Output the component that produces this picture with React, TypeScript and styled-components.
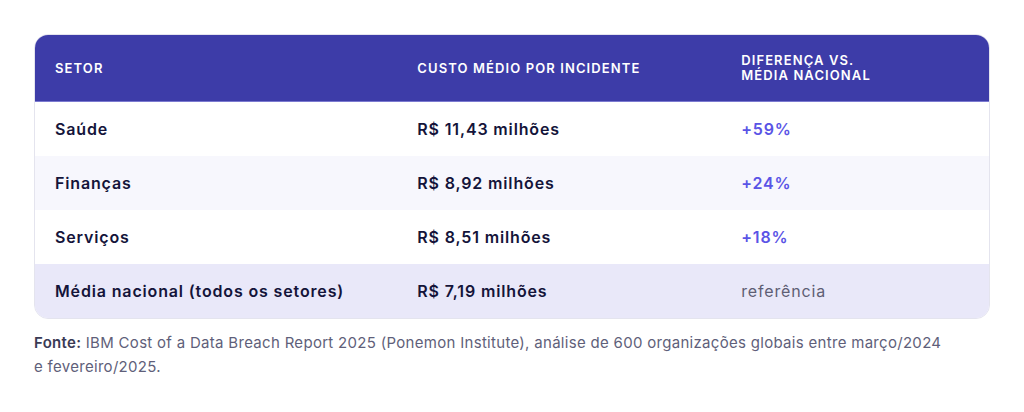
import React from 'react'
import styled, { createGlobalStyle } from 'styled-components'

const Global = createGlobalStyle`
  html, body { margin: 0; padding: 0; background: #ffffff; }
  body { font-family: Inter, "Noto Sans", sans-serif; }
`

const Page = styled.div`
  padding: 34px;
`

const Card = styled.div`
  border: 1px solid #e4e4ee;
  border-radius: 14px;
  overflow: hidden;
`

const Table = styled.table`
  width: 100%;
  border-collapse: collapse;
  table-layout: fixed;
`

const Th = styled.th`
  background: #3d3ca8;
  color: #ffffff;
  text-align: left;
  font-size: 13px;
  font-weight: 600;
  letter-spacing: 1.1px;
  line-height: 15px;
  text-transform: uppercase;
  padding: 18px 20px;
  border-bottom: 1px solid #7b7ad0;
`

const Row = styled.tr<{ $tone: 'white' | 'soft' | 'total' }>`
  background: ${p => (p.$tone === 'white' ? '#ffffff' : p.$tone === 'soft' ? '#f7f7fd' : '#e9e8f9')};
  & + & td { border-top: 1px solid #e2e2ec; }
`

const Td = styled.td<{ $kind?: 'up' | 'ref' }>`
  padding: 16px 20px;
  font-size: 16px;
  line-height: 22px;
  font-weight: 600;
  letter-spacing: 0.85px;
  color: ${p => (p.$kind === 'up' ? '#5a54e6' : p.$kind === 'ref' ? '#5e5e74' : '#14143a')};
  ${p => p.$kind === 'ref' && 'font-weight: 400;'}
`

const Note = styled.p`
  margin: 12px 0 0;
  max-width: 916px;
  font-size: 15px;
  line-height: 24px;
  letter-spacing: 0.3px;
  color: #5f5f7a;
  strong { color: #3a3a55; font-weight: 600; }
`

const rows: { setor: string; custo: string; dif: string; tone: 'white' | 'soft' | 'total' }[] = [
  { setor: 'Saúde', custo: 'R$ 11,43 milhões', dif: '+59%', tone: 'white' },
  { setor: 'Finanças', custo: 'R$ 8,92 milhões', dif: '+24%', tone: 'soft' },
  { setor: 'Serviços', custo: 'R$ 8,51 milhões', dif: '+18%', tone: 'white' },
  { setor: 'Média nacional (todos os setores)', custo: 'R$ 7,19 milhões', dif: 'referência', tone: 'total' },
]

export default function App() {
  return (
    <Page>
      <Global />
      <Card>
        <Table>
          <colgroup>
            <col style={{ width: '37.98%' }} />
            <col style={{ width: '33.95%' }} />
            <col />
          </colgroup>
          <thead>
            <tr>
              <Th>Setor</Th>
              <Th>Custo médio por incidente</Th>
              <Th>Diferença vs.<br />média nacional</Th>
            </tr>
          </thead>
          <tbody>
            {rows.map(r => (
              <Row key={r.setor} $tone={r.tone}>
                <Td>{r.setor}</Td>
                <Td>{r.custo}</Td>
                <Td $kind={r.tone === 'total' ? 'ref' : 'up'}>{r.dif}</Td>
              </Row>
            ))}
          </tbody>
        </Table>
      </Card>
      <Note>
        <strong>Fonte:</strong> IBM Cost of a Data Breach Report 2025 (Ponemon Institute), análise de 600 organizações globais entre março/2024 e fevereiro/2025.
      </Note>
    </Page>
  )
}
